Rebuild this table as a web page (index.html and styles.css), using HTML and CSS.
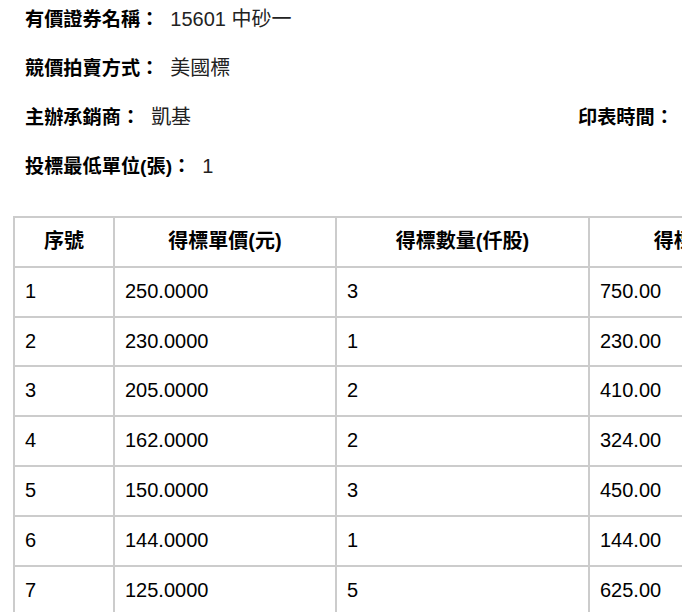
FILE: index.html
```html
<!DOCTYPE html>
<html lang="zh-Hant">
<head>
<meta charset="utf-8">
<title>競價拍賣得標結果</title>
<link rel="stylesheet" href="styles.css">
</head>
<body>
<div class="page">
  <div class="info">
    <div class="info-row"><span class="label">有價證券名稱：</span><span class="value">15601 中砂一</span></div>
    <div class="info-row"><span class="label">競價拍賣方式：</span><span class="value">美國標</span></div>
    <div class="info-row split">
      <div><span class="label">主辦承銷商：</span><span class="value">凱基</span></div>
      <div class="print-time"><span class="label">印表時間：</span></div>
    </div>
    <div class="info-row"><span class="label">投標最低單位(張)：</span><span class="value">1</span></div>
  </div>
  <table class="result">
    <thead>
      <tr>
        <th class="c-no">序號</th>
        <th class="c-price">得標單價(元)</th>
        <th class="c-qty">得標數量(仟股)</th>
        <th class="c-amt">得標金額(仟元)</th>
      </tr>
    </thead>
    <tbody>
      <tr><td>1</td><td>250.0000</td><td>3</td><td>750.00</td></tr>
      <tr><td>2</td><td>230.0000</td><td>1</td><td>230.00</td></tr>
      <tr><td>3</td><td>205.0000</td><td>2</td><td>410.00</td></tr>
      <tr><td>4</td><td>162.0000</td><td>2</td><td>324.00</td></tr>
      <tr><td>5</td><td>150.0000</td><td>3</td><td>450.00</td></tr>
      <tr><td>6</td><td>144.0000</td><td>1</td><td>144.00</td></tr>
      <tr><td>7</td><td>125.0000</td><td>5</td><td>625.00</td></tr>
    </tbody>
  </table>
</div>
</body>
</html>
```

FILE: styles.css
```css
html, body {
  margin: 0;
  padding: 0;
  background: #fff;
  overflow-x: hidden;
}

body {
  font-family: "Liberation Sans", Arial, "Noto Sans CJK TC", sans-serif;
  font-size: 19.2px;
  color: #111;
}

.page {
  width: 851px;
  padding: 5px 0 0 13px;
  box-sizing: border-box;
}

.info {
  display: flex;
  flex-direction: column;
  gap: 20px;
  padding-left: 12px;
  margin-bottom: 35px;
}

.info-row {
  line-height: 29px;
  white-space: nowrap;
}

.info-row.split {
  display: grid;
  grid-template-columns: 1fr 273px;
}

.label {
  font-weight: bold;
  color: #000;
}

.value {
  margin-left: 11px;
  font-size: 20px;
  color: #222;
}

.result {
  border-collapse: separate;
  border-spacing: 0;
  table-layout: fixed;
  width: 840px;
  font-size: 20px;
  border-top: 2px solid #ccc;
  border-left: 2px solid #ccc;
}

.result th,
.result td {
  box-sizing: border-box;
  border-right: 2px solid #ccc;
  border-bottom: 2px solid #ccc;
  padding: 0 10px;
  line-height: 47.8px;
  white-space: nowrap;
  color: #000;
}

.result th {
  font-weight: bold;
  text-align: center;
}

.result td {
  text-align: left;
  font-weight: normal;
}

.c-no { width: 100px; }
.c-price { width: 222px; }
.c-qty { width: 253px; }
.c-amt { width: 263px; }
```
